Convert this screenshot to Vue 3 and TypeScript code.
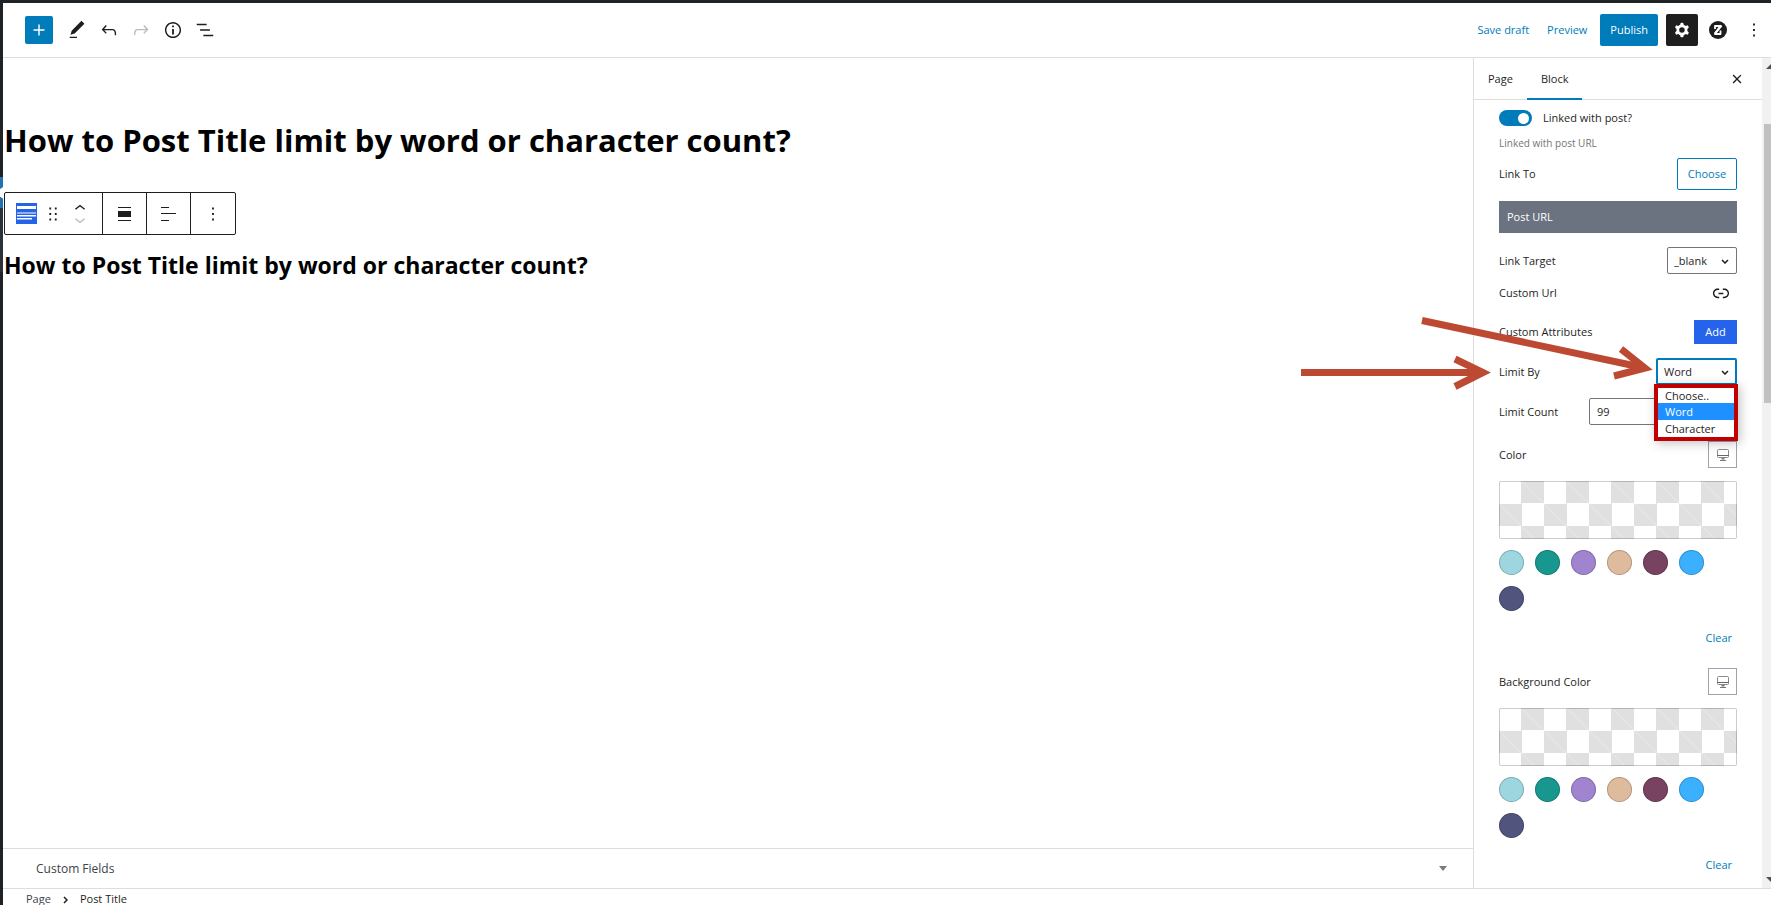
<script setup lang="ts">
import { ref } from 'vue'

interface Swatch { name: string; value: string }
interface Tool { label: string; path: string; disabled?: boolean }

const tools: Tool[] = [
  { label: 'Tools', path: 'M20.1 5.1L16.9 2 6.2 12.7l-1.3 4.4 4.5-1.3L20.1 5.1zM4 20.8h8v-1.5H4v1.5z' },
  { label: 'Undo', path: 'M18.3 11.7c-.6-.6-1.4-.9-2.3-.9H6.7l2.9-3.3-1.1-1-4.5 5L8.5 16l1-1-2.7-2.7H16c.5 0 .9.2 1.3.5 1 1 1 3.4 1 4.5v.3h1.5v-.2c0-1.5 0-4.3-1.5-5.7z' },
  { label: 'Redo', disabled: true, path: 'M15.6 6.5l-1.1 1 2.9 3.3H8c-.9 0-1.7.3-2.3.9-1.4 1.5-1.4 4.2-1.4 5.6v.2h1.5v-.3c0-1.1 0-3.5 1-4.5.3-.3.7-.5 1.3-.5h9.2L14.5 15l1.1 1.1 4.6-4.6-4.6-5z' },
  { label: 'Details', path: 'M12 3.2c-4.8 0-8.8 3.9-8.8 8.8 0 4.8 3.9 8.8 8.8 8.8 4.8 0 8.8-3.9 8.8-8.8 0-4.8-4-8.8-8.8-8.8zm0 16c-4 0-7.2-3.3-7.2-7.2C4.8 8 8 4.8 12 4.8s7.2 3.3 7.2 7.2c0 4-3.2 7.2-7.2 7.2zM11 17h2v-6h-2v6zm0-8h2V7h-2v2z' },
  { label: 'List View', path: 'M13.8 5.2H3v1.5h10.8V5.2zm-3.6 12v1.5H21v-1.5H10.2zm7.2-6H6.6v1.5h10.8v-1.5z' },
]

const swatches: Swatch[] = [
  { name: 'Light cyan', value: '#9dd6df' },
  { name: 'Teal', value: '#18978f' },
  { name: 'Lavender', value: '#a084cf' },
  { name: 'Sand', value: '#dfbb9d' },
  { name: 'Plum', value: '#774360' },
  { name: 'Sky blue', value: '#3ab0ff' },
  { name: 'Indigo', value: '#51557e' },
]

const colorPanels = ['Color', 'Background Color']
const limitOptions = ['Choose..', 'Word', 'Character']
const title = ref('How to Post Title limit by word or character count?')
const linked = ref(true)
const target = ref('_blank')
const limitBy = ref('Word')
const limitCount = ref('99')
</script>

<template>
  <div class="screen">
    <div class="menu-edge" aria-hidden="true">
      <svg width="3" height="100" viewBox="0 0 3 100">
        <path d="M0 0h3v10L0 12z" fill="#2271b1" />
        <path d="M0 12l3-2v12L0 20z" fill="#fff" />
        <path d="M0 20l3 2v9H0z" fill="#2271b1" />
        <path d="M0 31h3v64H0z" fill="#2c3338" />
      </svg>
    </div>
    <div class="editor">
      <header class="topbar">
        <div class="tools">
          <button class="inserter" aria-label="Toggle block inserter">
            <svg class="icon" viewBox="0 0 24 24"><path d="M18 11.2h-5.2V6h-1.6v5.2H6v1.6h5.2V18h1.6v-5.2H18z" /></svg>
          </button>
          <button v-for="t in tools" :key="t.label" class="tool" :disabled="t.disabled" :aria-label="t.label">
            <svg class="icon" viewBox="0 0 24 24"><path :d="t.path" /></svg>
          </button>
        </div>
        <div class="actions">
          <button class="text-btn">Save draft</button>
          <button class="text-btn">Preview</button>
          <button class="publish">Publish</button>
          <button class="settings" aria-label="Settings">
            <svg class="icon" viewBox="0 0 24 24"><path fill-rule="evenodd" d="M10.289 4.836A1 1 0 0111.275 4h1.306a1 1 0 01.987.836l.244 1.466c.787.26 1.503.679 2.108 1.218l1.393-.522a1 1 0 011.216.437l.653 1.13a1 1 0 01-.23 1.273l-1.148.944a6.025 6.025 0 010 2.435l1.149.946a1 1 0 01.23 1.272l-.653 1.13a1 1 0 01-1.216.437l-1.394-.522c-.605.54-1.32.958-2.108 1.218l-.244 1.466a1 1 0 01-.987.836h-1.306a1 1 0 01-.986-.836l-.244-1.466a5.995 5.995 0 01-2.108-1.218l-1.394.522a1 1 0 01-1.217-.436l-.653-1.131a1 1 0 01.23-1.272l1.149-.946a6.026 6.026 0 010-2.435l-1.148-.944a1 1 0 01-.23-1.272l.653-1.131a1 1 0 011.217-.437l1.393.522a5.994 5.994 0 012.108-1.218l.244-1.466zM14.929 12a3 3 0 11-6 0 3 3 0 016 0z" /></svg>
          </button>
          <button class="plugin" aria-label="Block plugin">
            <svg width="18" height="18" viewBox="0 0 18 18">
              <circle cx="9" cy="9" r="9" fill="#1e1e1e" />
              <path d="M6 8V5h5.500L6 12.500V13h5.500V9.500" fill="none" stroke="#fff" stroke-width="1.800" stroke-linejoin="round" />
              <path d="M12.500 4.500L6 12.500" fill="none" stroke="#fff" stroke-width="2" />
            </svg>
          </button>
          <button class="more" aria-label="Options">
            <svg class="icon" viewBox="0 0 24 24"><path d="M13 19h-2v-2h2v2zm0-6h-2v-2h2v2zm0-6h-2V5h2v2z" /></svg>
          </button>
        </div>
      </header>

      <div class="body">
        <main class="content">
          <div class="canvas">
            <h1>{{ title }}</h1>
            <div class="toolbar" role="toolbar" aria-label="Block tools">
              <div class="group first">
                <button aria-label="Post Title">
                  <svg width="21" height="21" viewBox="0 0 21 21">
                    <path fill="#2563eb" d="M0 0h21v21H0z" />
                    <path fill="#fff" d="M1 3h19v3H1zM1 9.500h19v1H1zM1 12h19v1.500H1zM1 15h15v1.500H1z" />
                  </svg>
                </button>
                <button aria-label="Drag">
                  <svg class="icon" viewBox="0 0 24 24"><path d="M8 7h2V5H8v2zm0 6h2v-2H8v2zm0 6h2v-2H8v2zm6-14v2h2V5h-2zm0 8h2v-2h-2v2zm0 6h2v-2h-2v2z" /></svg>
                </button>
                <div class="movers">
                  <button aria-label="Move up"><svg width="22" height="14" viewBox="0 3 24 15"><path d="M6.500 12.400L12 8l5.500 4.400-.9 1.200L12 10l-4.500 3.600-1-1.200z" /></svg></button>
                  <button aria-label="Move down" disabled><svg width="22" height="14" viewBox="0 6 24 15"><path d="M17.500 11.600L12 16l-5.500-4.400.9-1.200L12 14l4.500-3.600 1 1.200z" /></svg></button>
                </div>
              </div>
              <div class="group">
                <button aria-label="Align">
                  <svg width="14" height="14" viewBox="0 0 14 14"><path d="M0 0h13v1H0zM0 4h13v6H0zM0 13h13v1H0z" /></svg>
                </button>
              </div>
              <div class="group">
                <button aria-label="Align text left">
                  <svg width="15" height="14" viewBox="0 0 15 14"><path d="M0 0h8v1H0zM0 6h15v1H0zM0 13h8v1H0z" /></svg>
                </button>
              </div>
              <div class="group last">
                <button aria-label="Options">
                  <svg class="icon" viewBox="0 0 24 24"><path d="M13 19h-2v-2h2v2zm0-6h-2v-2h2v2zm0-6h-2V5h2v2z" /></svg>
                </button>
              </div>
            </div>
            <h2>{{ title }}</h2>
          </div>
          <button class="custom-fields">
            <span>Custom Fields</span>
            <svg width="8" height="5" viewBox="0 0 8 5"><path d="M0 0h8L4 5z" fill="#787c82" /></svg>
          </button>
        </main>

        <aside class="sidebar">
          <div class="panel">
            <div class="tabs">
              <button class="tab">Page</button>
              <button class="tab active">Block</button>
              <button class="close" aria-label="Close settings">
                <svg class="icon" viewBox="0 0 24 24"><path d="M12 13.060l3.712 3.713 1.061-1.060L13.061 12l3.712-3.712-1.060-1.060L12 10.938 8.288 7.227l-1.061 1.060L10.939 12l-3.712 3.712 1.060 1.061L12 13.061z" /></svg>
              </button>
            </div>
            <div class="fields">
              <label class="toggle">
                <input v-model="linked" type="checkbox" />
                <span>Linked with post?</span>
              </label>
              <p class="help">Linked with post URL</p>
              <div class="row link-to">
                <span>Link To</span>
                <button class="choose">Choose</button>
              </div>
              <div class="post-url">Post URL</div>
              <div class="row link-target">
                <label for="target">Link Target</label>
                <div class="select-wrap">
                  <select id="target" v-model="target"><option>_blank</option><option>_self</option></select>
                  <svg class="arrow" width="8" height="5" viewBox="0 0 8 5"><path d="M1 1l3 3 3-3" /></svg>
                </div>
              </div>
              <div class="row custom-url">
                <span>Custom Url</span>
                <button class="link-btn" aria-label="Custom Url">
                  <svg class="icon" viewBox="0 0 24 24"><path d="M15.600 7.200H14v1.500h1.600c2 0 3.700 1.700 3.700 3.700s-1.700 3.700-3.700 3.700H14v1.500h1.600c2.800 0 5.200-2.300 5.200-5.200 0-2.900-2.300-5.200-5.200-5.200zM4.700 12.400c0-2 1.700-3.700 3.700-3.700H10V7.200H8.400c-2.900 0-5.200 2.300-5.200 5.200 0 2.900 2.300 5.200 5.200 5.200H10v-1.500H8.400c-2 0-3.700-1.700-3.700-3.700zm4.600.9h5.300v-1.500H9.300v1.500z" /></svg>
                </button>
              </div>
              <div class="row attributes">
                <span>Custom Attributes</span>
                <button class="add">Add</button>
              </div>
              <div class="row limit-by">
                <label for="limit-by">Limit By</label>
                <div class="select-wrap wide">
                  <select id="limit-by" v-model="limitBy" class="focused">
                    <option v-for="o in limitOptions" :key="o">{{ o }}</option>
                  </select>
                  <svg class="arrow" width="8" height="5" viewBox="0 0 8 5"><path d="M1 1l3 3 3-3" /></svg>
                  <ul class="options" role="listbox" aria-label="Limit By">
                    <li v-for="o in limitOptions" :key="o" role="option" :aria-selected="o === limitBy" :class="{ selected: o === limitBy }">{{ o }}</li>
                  </ul>
                </div>
              </div>
              <div class="row limit-count">
                <label for="limit-count">Limit Count</label>
                <input id="limit-count" v-model="limitCount" type="text" />
              </div>
              <section v-for="name in colorPanels" :key="name" class="color-panel">
                <div class="row">
                  <span>{{ name }}</span>
                  <button class="device" :aria-label="name + ' device'">
                    <svg width="12" height="12" viewBox="0 0 12 12">
                      <rect x="0.500" y="0.500" width="11" height="8" rx="1" fill="none" stroke="#8a8a8a" />
                      <path d="M0 6h12v1H0z" fill="#666" /><path d="M4.500 9h3v1.500h-3zM3 11h6v1H3z" fill="#777" />
                    </svg>
                  </button>
                </div>
                <button class="checker" :aria-label="'Custom ' + name"></button>
                <div class="swatches">
                  <button v-for="s in swatches" :key="s.value" class="swatch" :style="{ backgroundColor: s.value }" :aria-label="s.name"></button>
                </div>
                <button class="clear">Clear</button>
              </section>
            </div>
            <svg class="annotations" width="360" height="80" viewBox="0 0 360 80" aria-hidden="true">
              <g fill="none" stroke="#bd4932" stroke-width="7">
                <path d="M1 57.500H182M155 44l28 13.500-28 14" />
                <path d="M122 5.500L345 53M321 34l24 19-31 8" />
              </g>
            </svg>
          </div>
          <div class="scrollbar" aria-hidden="true">
            <svg width="5" height="6" viewBox="0 0 5 6"><path d="M0 6l5-5v5z" fill="#505050" /></svg>
            <div class="thumb"></div>
            <svg width="5" height="6" viewBox="0 0 5 6"><path d="M0 0h5v5z" fill="#505050" /></svg>
          </div>
        </aside>
      </div>

      <footer class="breadcrumb">
        <a href="#page">Page</a>
        <svg width="5" height="8" viewBox="0 0 5 8"><path d="M1 1l3 3-3 3" /></svg>
        <span>Post Title</span>
      </footer>
    </div>
  </div>
</template>

<style>
html, body { margin: 0; background: #fff; }
</style>

<style scoped>
* { box-sizing: border-box; }
.screen {
  display: flex;
  height: 100vh;
  overflow: hidden;
  border-top: 3px solid #1d2327;
  background: #fff;
  color: #1e1e1e;
  font: 11px/18px "Segoe UI", "Open Sans", "Noto Sans", sans-serif;
}
button, input, select { font: inherit; color: inherit; margin: 0; }
button { display: flex; align-items: center; justify-content: center; padding: 0; border: 0; background: none; }
svg { display: block; flex: none; fill: currentColor; }
.icon { width: 22px; height: 22px; }
.menu-edge { flex: none; width: 3px; padding-top: 174px; background: #1d2327; }
.editor { flex: 1; min-width: 0; display: flex; flex-direction: column; }

.topbar { flex: none; height: 55px; display: flex; align-items: center; justify-content: space-between; border-bottom: 1px solid #ddd; padding-left: 22px; padding-right: 6px; }
.tools { display: flex; align-items: center; gap: 4px; }
.tools button { width: 28px; height: 28px; }
.tools .inserter { background: #007cba; color: #fff; border-radius: 2px; margin-right: 6px; }
.tool:disabled, .movers button:disabled { color: #bbb; }
.actions { display: flex; align-items: center; gap: 8px; color: #007cba; }
.text-btn { padding: 0 5px; }
.publish { height: 32px; padding: 0 10px; border-radius: 2px; background: #007cba; color: #fff; }
.settings { width: 32px; height: 32px; border-radius: 2px; background: #1e1e1e; color: #fff; }
.plugin { width: 24px; }
.more { width: 22px; color: #1e1e1e; margin-left: 5px; }

.body { flex: 1; min-height: 0; display: flex; }
.content { flex: 1; min-width: 0; display: flex; flex-direction: column; }
.canvas { flex: 1; min-height: 0; padding: 59px 1px 0; color: #000; }
h1, h2 { margin: 0; font-weight: 700; }
h1 { font-size: 31px; line-height: 46px; }
h2 { font-size: 23px; line-height: 34px; margin-top: 13px; }
.toolbar { display: inline-flex; height: 43px; margin-top: 29px; border: 1px solid #1e1e1e; border-radius: 2px; color: #1e1e1e; vertical-align: top; }
.group { display: flex; align-items: center; justify-content: center; width: 44px; border-right: 1px solid #1e1e1e; }
.group.first { width: 98px; gap: 5px; }
.group.last { border-right: 0; }
.movers { display: flex; flex-direction: column; }
.custom-fields { flex: none; height: 40px; justify-content: space-between; border-top: 1px solid #ddd; padding: 0 26px 0 33px; color: #3c434a; font-size: 12px; }

.sidebar { flex: none; width: 298px; display: flex; border-left: 1px solid #ddd; }
.panel { position: relative; flex: 1; min-width: 0; }
.tabs { display: flex; height: 42px; border-bottom: 1px solid #ddd; }
.tab { padding: 0 14px; }
.tab.active { margin-bottom: -1px; border-bottom: 2px solid #007cba; padding-top: 1px; }
.close { margin-left: auto; width: 22px; margin-right: 14px; }
.fields { padding: 10px 25px 0; }
.row { display: flex; align-items: center; justify-content: space-between; }
.toggle { display: flex; align-items: center; height: 16px; gap: 11px; }
.toggle input { appearance: none; display: flex; justify-content: flex-end; align-items: center; width: 33px; height: 16px; margin: 0; border-radius: 8px; background: #007cba; padding-right: 3px; }
.toggle input::before { content: ""; width: 11px; height: 11px; border-radius: 50%; background: #fff; }
.help { margin: 8px 0 6px; color: #757575; font-size: 10px; }
.choose { width: 60px; height: 32px; border: 1px solid #007cba; border-radius: 2px; color: #007cba; }
.post-url { margin-top: 11px; height: 32px; line-height: 32px; padding: 0 8px; background: #6b7280; color: #fff; }
.link-target { margin-top: 14px; }
.select-wrap { position: relative; width: 70px; height: 27px; }
.select-wrap.wide { width: 81px; }
select { appearance: none; width: 100%; height: 27px; padding: 0 6px; border: 1px solid #757575; border-radius: 2px; background: #fff; }
select.focused { border: 2px solid #007cba; outline: 0; }
.arrow { position: absolute; right: 8px; top: 12px; pointer-events: none; }
.arrow path, .breadcrumb path { fill: none; stroke: #1e1e1e; stroke-width: 1.5; }
.custom-url { margin-top: 8px; }
.link-btn { width: 33px; height: 22px; }
.attributes { margin-top: 16px; }
.add { width: 43px; height: 24px; background: #2563eb; color: #fff; }
.limit-by { margin-top: 14px; }
.options { position: absolute; z-index: 2; top: 26px; left: -2px; right: -1px; margin: 0; padding: 0; border: 4px solid #c00000; background: #fff; list-style: none; box-shadow: 2px 2px 10px rgba(0, 0, 0, 0.25); }
.options li { padding: 0 7px; line-height: 17px; }
.options li:first-child { line-height: 15px; }
.options .selected { background: #1e90ff; color: #fff; }
.limit-count { margin-top: 13px; }
.limit-count input { width: 148px; height: 27px; padding: 0 7px; border: 1px solid #757575; border-radius: 2px; background: #fff; }
.color-panel { display: flex; flex-direction: column; margin-top: 16px; }
.color-panel + .color-panel { margin-top: 21px; }
.device { width: 29px; height: 27px; border: 1px solid #9ca3af; }
.checker {
  height: 58px;
  margin-top: 13px;
  border: 1px solid rgba(0, 0, 0, 0.2);
  border-radius: 2px;
  background-origin: border-box;
  background-image:
    linear-gradient(45deg, transparent 24%, #ebebeb 25%, transparent 26%, transparent 74%, #ebebeb 75%, transparent 76%),
    repeating-conic-gradient(#e0e0e0 0 25%, #fff 0 50%);
  background-size: 45px 45px;
}
.swatches { display: flex; flex-wrap: wrap; gap: 11px; margin-top: 11px; }
.swatch { width: 25px; height: 25px; border-radius: 50%; box-shadow: inset 0 0 0 1px rgba(0, 0, 0, 0.2); }
.clear { align-self: flex-end; margin-top: 18px; padding: 0 5px; color: #007cba; }
.annotations { position: absolute; top: 257px; right: 102px; z-index: 1; pointer-events: none; }
.scrollbar { flex: none; width: 9px; display: flex; flex-direction: column; align-items: flex-end; padding: 5px 0; background: #f1f1f1; }
.thumb { width: 7px; height: 34%; margin-top: 55px; margin-bottom: auto; background: #c1c1c1; }

.breadcrumb { flex: none; display: flex; align-items: flex-start; gap: 12px; height: 17px; overflow: hidden; border-top: 1px solid #ddd; padding-left: 23px; line-height: 20px; }
.breadcrumb a { color: #3c434a; text-decoration: none; }
.breadcrumb svg { margin-top: 7px; }
</style>
